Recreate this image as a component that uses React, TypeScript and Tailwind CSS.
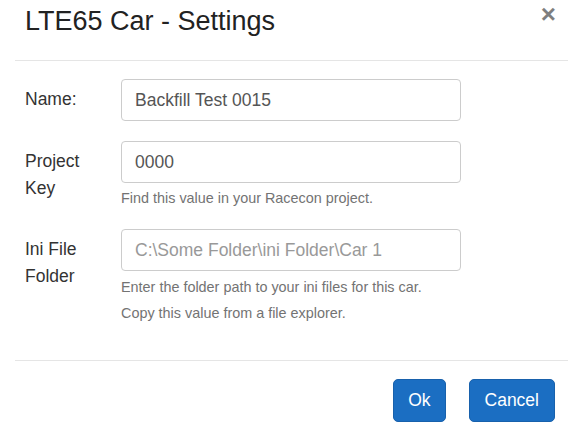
import React from 'react';

const fields = [
  { label: 'Name:', value: 'Backfill Test 0015', placeholder: '', help: [] as string[] },
  { label: 'Project Key', value: '0000', placeholder: '', help: ['Find this value in your Racecon project.'] },
  {
    label: 'Ini File Folder',
    value: '',
    placeholder: 'C:\\Some Folder\\ini Folder\\Car 1',
    help: ['Enter the folder path to your ini files for this car.', 'Copy this value from a file explorer.'],
  },
];

const rowGap = ['mb-[20px]', 'mb-[21px]', 'mb-0'];

const SettingsModal = () => {
  return (
    <div className="w-[576px] h-[445px] bg-white pl-[15px] pr-[8px] font-['Liberation_Sans',Arial,sans-serif] text-[#333]">
      {/* header */}
      <div className="h-[61px] border-b border-[#e5e5e5] pl-[10px] flex justify-between items-start">
        <h4 className="mt-[5px] text-[27px] leading-[32px] text-[#222]">LTE65 Car - Settings</h4>
        <button
          type="button"
          className="mt-[1px] mr-[12px] text-[26px] leading-[26px] font-bold text-black opacity-50"
        >
          ×
        </button>
      </div>

      {/* body */}
      <div className="pt-[18px] pb-[37px] pl-[10px]">
        {fields.map((f, i) => (
          <div key={f.label} className={`flex ${rowGap[i]}`}>
            <label className="w-[96px] pt-[7px] pr-[20px] text-[17.5px] leading-[27px] text-[#333]">{f.label}</label>
            <div className="w-[340px]">
              <input
                type="text"
                defaultValue={f.value}
                placeholder={f.placeholder}
                className="w-full h-[42px] px-[13px] border border-[#ccc] rounded-[4px] text-[17.5px] text-[#555] placeholder:text-[#999] outline-none"
              />
              {f.help.map((h, j) => (
                <p key={j} className={`${j === 0 && i === 1 ? 'mt-[5px]' : 'mt-[6px]'} text-[14.4px] leading-[20px] text-[#737373]`}>
                  {h}
                </p>
              ))}
            </div>
          </div>
        ))}
      </div>

      {/* footer */}
      <div className="border-t border-[#e5e5e5] pt-[18px] pr-[13px] flex justify-end gap-[23px]">
        <button
          type="button"
          className="h-[43px] px-[14px] rounded-[5px] border border-[#1861ac] bg-[#1b6ec2] text-white text-[17.5px]"
        >
          Ok
        </button>
        <button
          type="button"
          className="h-[43px] px-[15px] rounded-[5px] border border-[#1861ac] bg-[#1b6ec2] text-white text-[17.5px]"
        >
          Cancel
        </button>
      </div>
    </div>
  );
};

export default function App() {
  return <SettingsModal />;
}
